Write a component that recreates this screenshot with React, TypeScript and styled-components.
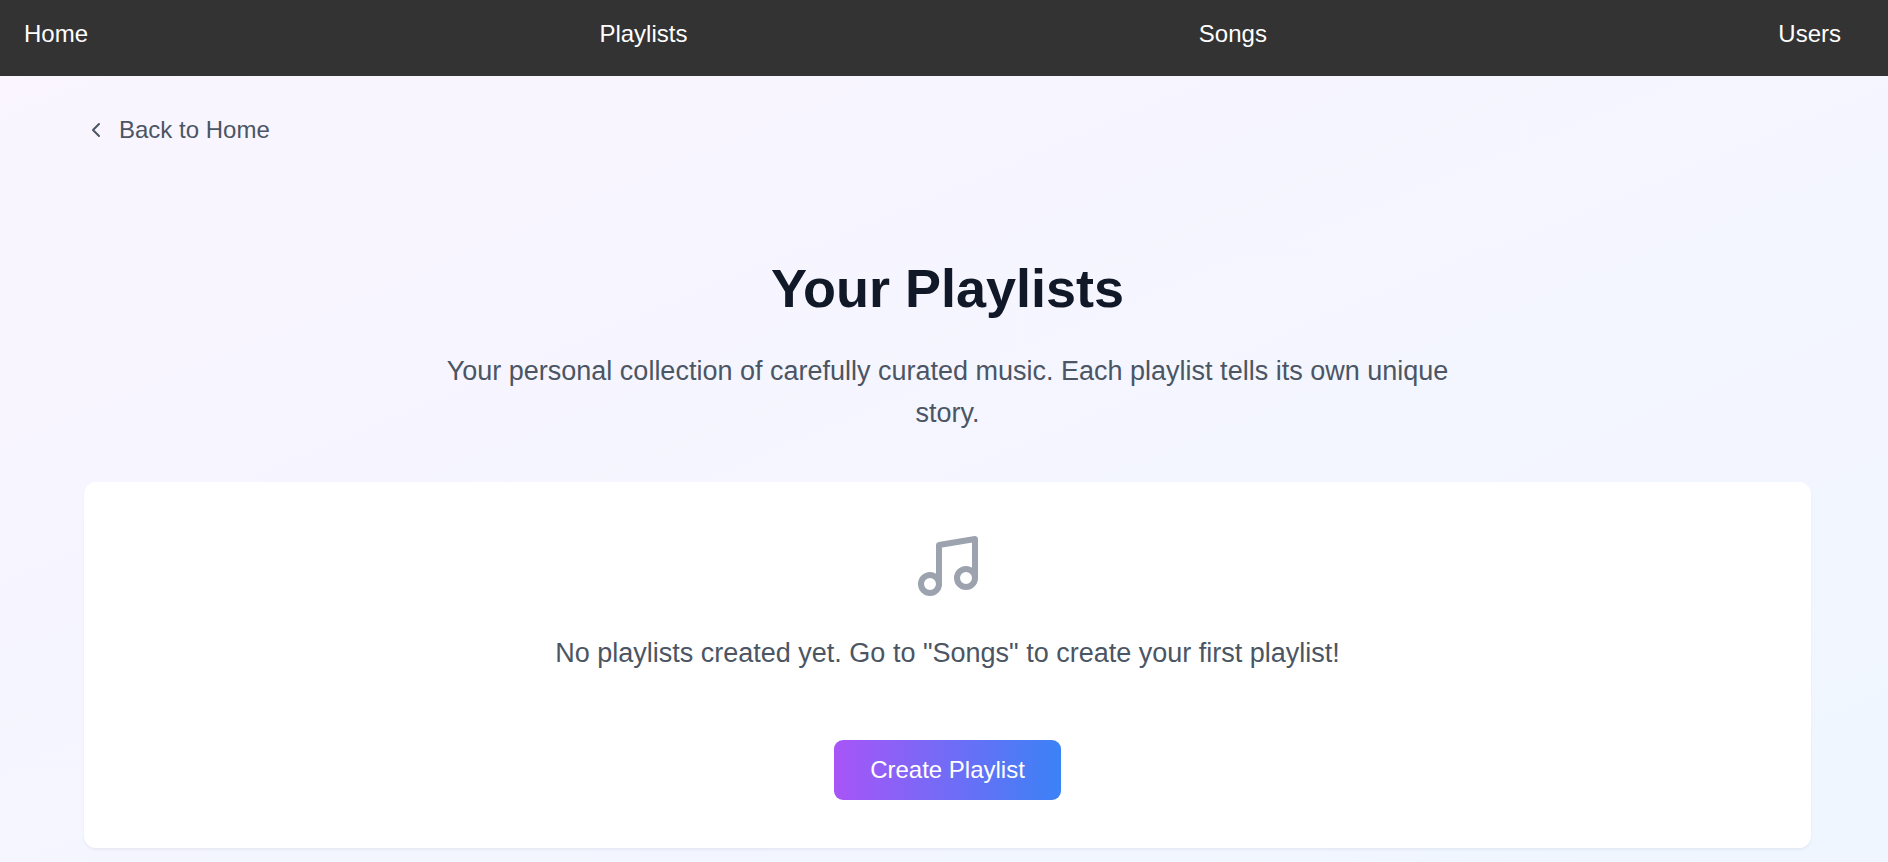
import React from "react";
import styled, { createGlobalStyle } from "styled-components";
import { ChevronLeft, Music } from "lucide-react";

const GlobalStyle = createGlobalStyle`
  * { box-sizing: border-box; }
  body {
    margin: 0;
    font-family: "Liberation Sans", Arial, sans-serif;
    color: #4b5563;
  }
`;

const Nav = styled.nav`
  background: #333;
  padding: 16px 24px 24px;
`;

const NavList = styled.ul`
  display: flex;
  justify-content: space-between;
  list-style: none;
  margin: 0;
  padding: 0 23px 0 0;
`;

const NavLink = styled.a`
  color: #fff;
  font-size: 24px;
  line-height: 36px;
  text-decoration: none;
`;

const Page = styled.main`
  min-height: calc(100vh - 76px);
  padding: 36px 77px 14px 84px;
  background: linear-gradient(to bottom right, #faf5ff, #eff6ff);
`;

const BackLink = styled.a`
  display: inline-flex;
  align-items: center;
  gap: 11px;
  color: #4b5563;
  font-size: 24px;
  line-height: 36px;
  text-decoration: none;
`;

const Header = styled.header`
  max-width: 1008px;
  margin: 108px auto 48px;
  text-align: center;
`;

const Title = styled.h1`
  margin: 0 0 30px;
  color: #111827;
  font-size: 54px;
  line-height: 64px;
`;

const Text = styled.p`
  margin: 0;
  font-size: 27px;
  line-height: 42px;
`;

const EmptyCard = styled.section`
  display: flex;
  flex-direction: column;
  align-items: center;
  padding: 48px;
  background: #fff;
  border-radius: 12px;
  box-shadow: 0 2px 3px rgba(0, 0, 0, 0.05);
`;

const NoteIcon = styled(Music)`
  margin-bottom: 30px;
  color: #9ca3af;
`;

const CreateButton = styled.button`
  margin-top: 66px;
  padding: 12px 36px;
  border: 0;
  border-radius: 9px;
  background: linear-gradient(to right, #a855f7, #3b82f6);
  color: #fff;
  font: inherit;
  font-size: 24px;
  line-height: 36px;
  cursor: pointer;
`;

const links = ["Home", "Playlists", "Songs", "Users"];

export default function App() {
  return (
    <>
      <GlobalStyle />
      <Nav>
        <NavList>
          {links.map((label) => (
            <li key={label}>
              <NavLink href={`#${label.toLowerCase()}`}>{label}</NavLink>
            </li>
          ))}
        </NavList>
      </Nav>
      <Page>
        <BackLink href="#home">
          <ChevronLeft size={24} />
          Back to Home
        </BackLink>
        <Header>
          <Title>Your Playlists</Title>
          <Text>
            Your personal collection of carefully curated music. Each playlist
            tells its own unique story.
          </Text>
        </Header>
        <EmptyCard>
          <NoteIcon size={72} />
          <Text>
            No playlists created yet. Go to "Songs" to create your first
            playlist!
          </Text>
          <CreateButton type="button">Create Playlist</CreateButton>
        </EmptyCard>
      </Page>
    </>
  );
}
